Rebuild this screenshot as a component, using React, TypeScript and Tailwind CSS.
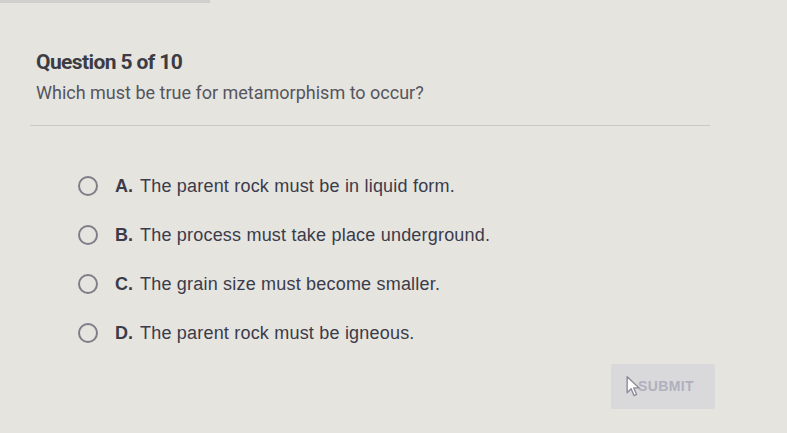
import React from 'react';

const options = [
  { key: 'A', text: 'The parent rock must be in liquid form.' },
  { key: 'B', text: 'The process must take place underground.' },
  { key: 'C', text: 'The grain size must become smaller.' },
  { key: 'D', text: 'The parent rock must be igneous.' },
];

export default function App() {
  return (
    <div className="w-[787px] h-[433px] overflow-hidden bg-[#e5e4df] relative" style={{ fontFamily: '"Liberation Sans", Arial, sans-serif' }}>
      <div className="h-[3px] w-[210px] bg-[#cfcfcf]" />
      <div className="pl-[36px] pt-[44px]">
        <h2 className="text-[21px] font-bold text-[#3c3c44] tracking-[-0.6px]" style={{ fontFamily: 'Roboto, sans-serif' }}>
          Question 5 of 10
        </h2>
        <p className="mt-0 text-[18px] leading-[28px] text-[#55555e]" style={{ fontFamily: 'Roboto, sans-serif' }}>
          Which must be true for metamorphism to occur?
        </p>
        <div className="mt-[18px] ml-[-6px] w-[680px] h-px bg-[#c8c8c8]" />
        <div className="mt-[50px] ml-[42px] flex flex-col gap-[28px]">
          {options.map((o) => (
            <div key={o.key} className="flex items-center h-[21px]">
              <span className="w-[20px] h-[20px] rounded-full border-2 border-[#7e7e88]" />
              <span className="ml-[17px] w-[25px] font-bold text-[18px] leading-[21px] text-[#3b3b4a]">{o.key}.</span>
              <span className="text-[18px] leading-[21px] text-[#3b3b4a] tracking-[0.2px]">{o.text}</span>
            </div>
          ))}
        </div>
        <div className="flex justify-end pr-[72px] mt-[20px]">
          <div className="relative w-[104px] h-[45px] bg-[#d9d9dc] rounded-[2px] flex items-center justify-center">
            <span className="ml-[6px] text-[14px] tracking-wide text-[#b0b0bc] font-semibold">SUBMIT</span>
            <svg className="absolute left-[15px] top-[11px]" width="16" height="24" viewBox="0 0 14 20">
              <path d="M1 1 L1 15 L4.5 11.5 L7 17.5 L9.3 16.5 L6.8 10.8 L11.5 10.8 Z" fill="#ffffff" stroke="#8a8a99" strokeWidth="1.2" strokeLinejoin="round" />
            </svg>
          </div>
        </div>
      </div>
    </div>
  );
}
